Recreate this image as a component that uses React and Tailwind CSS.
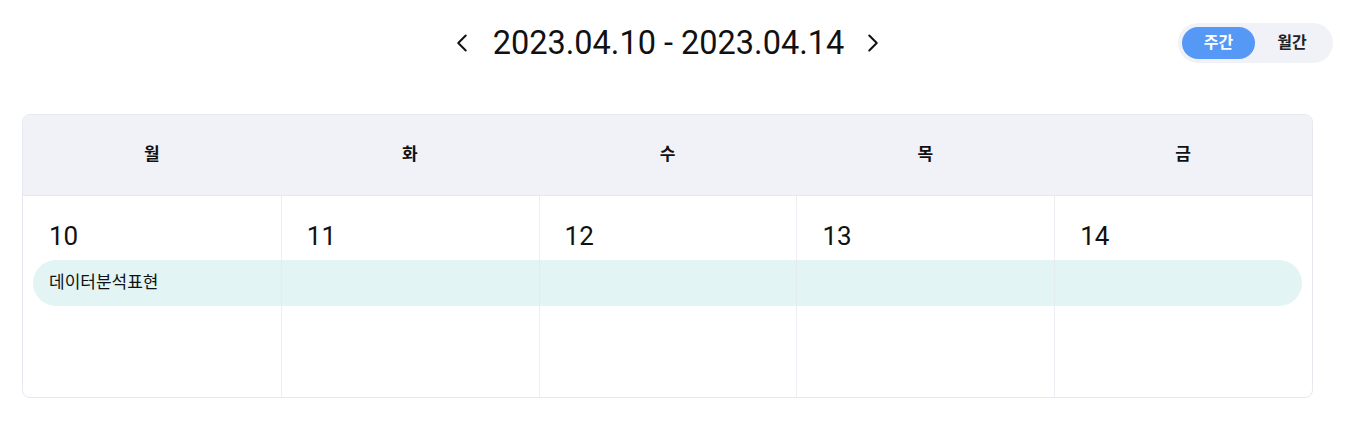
import { ChevronLeft, ChevronRight } from 'lucide-react'

const DAYS = [
  { label: '월', date: 10 },
  { label: '화', date: 11 },
  { label: '수', date: 12 },
  { label: '목', date: 13 },
  { label: '금', date: 14 },
]

const COL_START = ['col-start-1', 'col-start-2', 'col-start-3', 'col-start-4', 'col-start-5']

export default function App() {
  return (
    <div
      className="min-h-[425px] bg-white pl-[22px] pr-[33px] pt-[23px] text-[#111]"
      style={{ fontFamily: 'Roboto, "Noto Sans CJK KR", sans-serif' }}
    >
      {/* Top bar */}
      <div className="grid h-10 grid-cols-[1fr_auto_1fr] items-center">
        <div />
        <div className="flex items-center">
          <button className="text-[#111]">
            <ChevronLeft size={30} strokeWidth={1.6} />
          </button>
          <span className="ml-[16px] mr-[14px] text-[32.5px] leading-10">2023.04.10 - 2023.04.14</span>
          <button className="text-[#111]">
            <ChevronRight size={30} strokeWidth={1.6} />
          </button>
        </div>
        <div className="-mr-[20px] flex justify-end">
          <div className="flex h-10 items-center rounded-full bg-[#f1f2f7] p-1 text-[16px]">
            <button className="h-8 w-[73px] rounded-full bg-[#5598f6] font-bold text-white">주간</button>
            <button className="h-8 w-[74px] font-bold text-[#222]">월간</button>
          </div>
        </div>
      </div>

      {/* Week table */}
      <div className="mt-[51px] overflow-hidden rounded-lg border border-[#e6e7ef]">
        <div className="grid h-[81px] grid-cols-5 items-center border-b border-[#e6e7ef] bg-[#f1f2f7]">
          {DAYS.map(d => (
            <div key={d.label} className="text-center text-[17px] font-bold">{d.label}</div>
          ))}
        </div>

        <div className="grid h-[201px] grid-cols-5 grid-rows-[auto_auto_1fr]">
          {DAYS.map((d, i) => (
            <div key={d.date} className={`${COL_START[i]} row-start-1 pl-[26px] pt-[24px] text-[26px] leading-8`}>
              {d.date}
            </div>
          ))}

          <div className="col-span-5 col-start-1 row-start-2 mx-[10px] mt-[8px] flex h-[46px] items-center rounded-full bg-[#e3f4f4] pl-4 text-[17px]">
            데이터분석표현
          </div>

          {/* column dividers, painted over the event bar */}
          {DAYS.slice(1).map((d, i) => (
            <div
              key={`line-${d.date}`}
              className={`${COL_START[i + 1]} pointer-events-none row-span-3 row-start-1 border-l border-[#e6e7ef]/70`}
            />
          ))}
        </div>
      </div>
    </div>
  )
}
